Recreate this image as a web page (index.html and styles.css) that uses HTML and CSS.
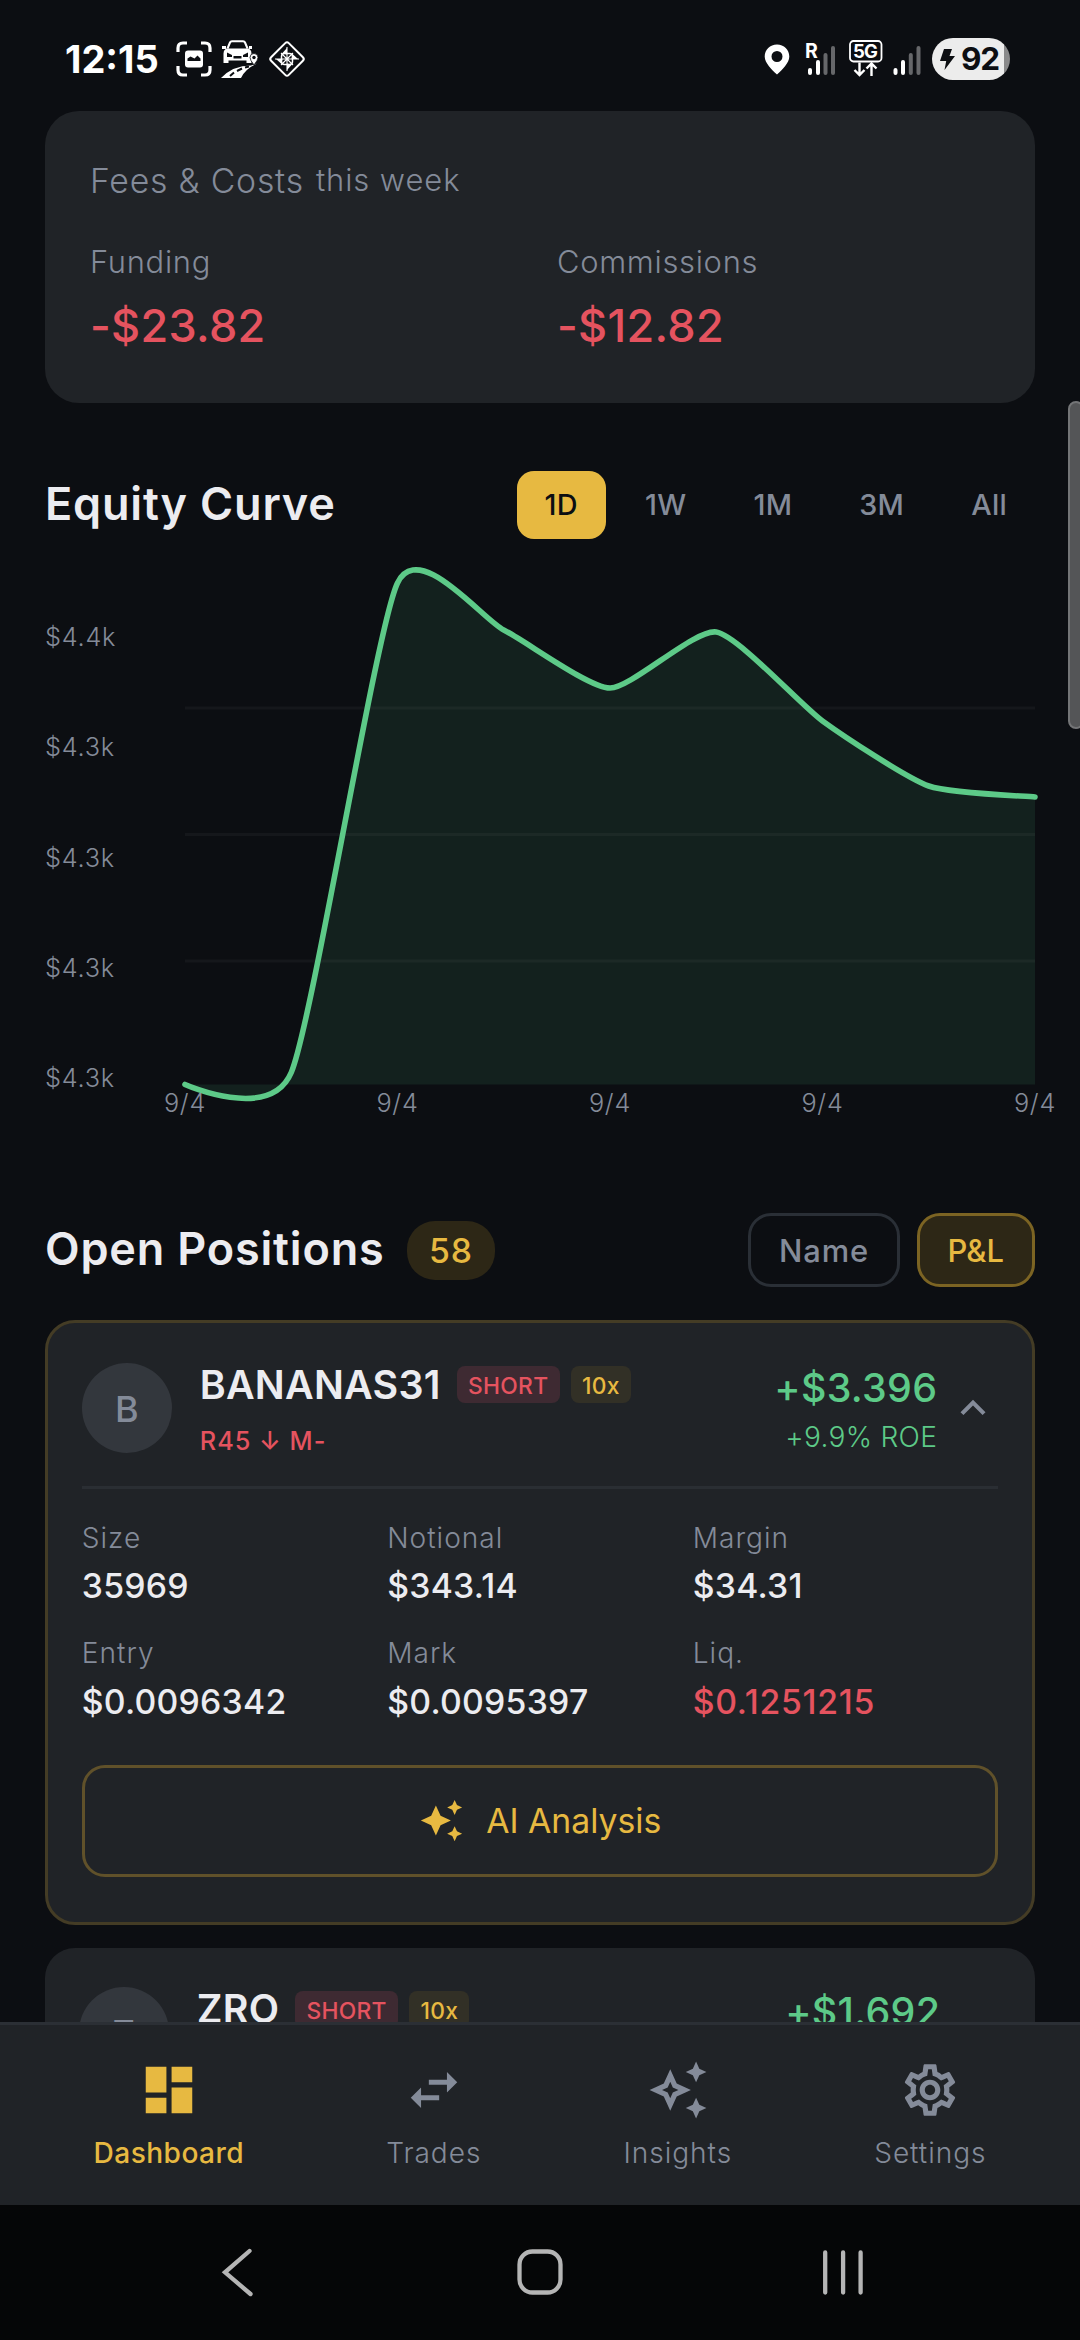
FILE: index.html
```html
<!doctype html>
<html lang="en">
    <head>
        <meta charset="utf-8">
        <title>Dashboard</title>
        <link rel="stylesheet" href="styles.css">
    </head>
    <body>
        <header class="status">
            <span class="clock">12:15</span>
            <svg class="ico-capture" width="36" height="36" viewBox="0 0 36 36">
                <path d="M2 11V7q0-5 5-5h4M25 2h4q5 0 5 5v4M34 25v4q0 5-5 5h-4M11 34H7q-5 0-5-5v-4" fill="none" stroke="#fff" stroke-width="3.2"/>
                <rect x="9" y="9.500" width="18" height="17" rx="3" fill="#fff"/>
                <path d="M11.500 20v-2.500l3-2 4 2 3-3 3 3V20z" fill="#0c0e12"/>
            </svg>
            <svg class="ico-car" width="37" height="38" viewBox="0 0 37 38">
                <path d="M6.500 8.500L9 2.500q.5-1.200 2-1.200h11q1.500 0 2 1.200l2.500 6" fill="none" stroke="#fff" stroke-width="2"/>
                <path d="M1 6h4v3H1zM28 6h3v3h-3zM5 8.500h23q2.500 2 2.500 5V23h-5v-2.500h-18V23h-5v-9.500q0-3 2.500-5z" fill="#fff"/>
                <path d="M6 12.500l5 2.500v2H6zM27 12.500l-5 2.500v2h5zM12.500 16h8v2.500h-8z" fill="#0c0e12"/>
                <path d="M0 38Q12 25.500 30 25.500L36 23.500Q24 29 20 38z" fill="#fff"/>
                <path d="M9 36l4-3.500M16 31l5-2.500M24 27.500l4-1" stroke="#0c0e12" stroke-width="2"/>
                <path d="M33 25q-4-5-4-7.500a4 4 0 0 1 8 0Q37 20 33 25z" fill="#fff" stroke="#0c0e12" stroke-width=".8"/>
                <circle cx="33" cy="17.500" r="1.700" fill="#0c0e12"/>
            </svg>
            <svg class="ico-diamond" width="38" height="38" viewBox="0 0 38 38" fill="none" stroke="#fff">
                <rect x="6.500" y="6.500" width="25" height="25" rx="2.500" transform="rotate(45 19 19)" stroke-width="2"/>
                <path d="M19 7v24M7 19h24M13 13l12 12M25 13L13 25" stroke-width="1.100"/>
                <path d="M19 8v6.500l-5-1zM30 19h-6.500l1-5zM19 30v-6.500l5 1zM8 19h6.500l-1 5z" fill="#fff" stroke="none"/>
                <rect x="13.500" y="13.500" width="11" height="11" rx="3" stroke-width="1.500"/>
            </svg>
            <span class="spacer"></span>
            <svg class="ico-pin" width="26" height="31" viewBox="0 0 26 31">
                <path fill="#fff" fill-rule="evenodd" d="M13 .500C6 .500.700 5.800.700 12.500.700 19 8 26 13 30.500 18 26 25.300 19 25.300 12.500 25.300 5.800 20 .500 13 .500zM13 7a5.500 5.500 0 1 1 0 11 5.500 5.500 0 0 1 0-11z"/>
            </svg>
            <svg class="ico-signal-r" width="31" height="34" viewBox="0 0 31 34">
                <text class="svg-text" x="0" y="16" font-size="19.500">R</text>
                <g stroke="#fff" stroke-width="4" stroke-linecap="round">
                    <path d="M5 28v3M13 20v11"/>
                    <path d="M20.500 13v18M28 6v25" stroke="#66676a"/>
                </g>
            </svg>
            <svg class="ico-5g" width="34" height="38" viewBox="0 0 34 38">
                <rect x="1" y="1" width="31.500" height="20.500" rx="3.500" fill="none" stroke="#fff" stroke-width="1.800"/>
                <text class="svg-text" x="4" y="18" font-size="18.500" textLength="25">5G</text>
                <path d="M10.500 22.500v13M5.500 30l5 5 5-5M22.500 36V23M17.500 28.500l5-5 5 5" fill="none" stroke="#fff" stroke-width="2.400"/>
            </svg>
            <svg class="ico-signal" width="28" height="34" viewBox="0 0 28 34">
                <g stroke="#fff" stroke-width="4" stroke-linecap="round">
                    <path d="M2.500 28v3M10 20v11"/>
                    <path d="M17.800 13v18M25.500 6v25" stroke="#66676a"/>
                </g>
            </svg>
            <span class="battery">
                <svg width="15" height="21" viewBox="0 0 15 21"><path d="M4 0h8l-2.500 7H15L4.500 21l1.700-9H0z" fill="#0c0e12"/></svg>92
            </span>
        </header>

        <main class="content">
            <section class="fees">
                <div class="fees-title">Fees &amp; Costs <small>this week</small></div>
                <div class="fees-row">
                    <div>
                        <div class="fees-label">Funding</div>
                        <div class="fees-value">-$23.82</div>
                    </div>
                    <div>
                        <div class="fees-label">Commissions</div>
                        <div class="fees-value">-$12.82</div>
                    </div>
                </div>
            </section>

            <div class="equity-head">
                <h2>Equity Curve</h2>
                <div class="tabs">
                    <span class="tab active">1D</span>
                    <span class="tab">1W</span>
                    <span class="tab">1M</span>
                    <span class="tab">3M</span>
                    <span class="tab">All</span>
                </div>
            </div>

            <div class="chart">
                <div class="y-axis">
                    <span>$4.4k</span>
                    <span>$4.3k</span>
                    <span>$4.3k</span>
                    <span>$4.3k</span>
                    <span>$4.3k</span>
                </div>
                <div class="plot">
                    <svg width="850" height="526" viewBox="0 0 850 526">
                        <path class="area" d="M0 524.500C0 524.500 85 562.650 106.250 512.500C127.500 462.350 191.250 67.250 212.500 23C233.750 -21.250 297.500 59.500 318.750 70C340 80.500 403.750 127.800 425 128C446.250 128.200 510 68.600 531.250 72C552.500 75.400 616.250 145.600 637.500 161C658.750 176.400 722.500 218.500 743.750 226C765 233.500 839.400 235.900 850 237V524.500z"/>
                        <path class="grid-line" d="M0 148h850M0 274.500h850M0 401h850"/>
                        <path class="curve" d="M0 524.500C0 524.500 85 562.650 106.250 512.500C127.500 462.350 191.250 67.250 212.500 23C233.750 -21.250 297.500 59.500 318.750 70C340 80.500 403.750 127.800 425 128C446.250 128.200 510 68.600 531.250 72C552.500 75.400 616.250 145.600 637.500 161C658.750 176.400 722.500 218.500 743.750 226C765 233.500 839.400 235.900 850 237"/>
                    </svg>
                    <div class="x-axis">
                        <span>9/4</span>
                        <span>9/4</span>
                        <span>9/4</span>
                        <span>9/4</span>
                        <span>9/4</span>
                    </div>
                </div>
            </div>

            <div class="positions-head">
                <h2>Open Positions</h2>
                <span class="count">58</span>
                <span class="spacer"></span>
                <span class="sort">Name</span>
                <span class="sort active">P&amp;L</span>
            </div>

            <section class="position open">
                <div class="position-top">
                    <div class="avatar">B</div>
                    <div class="info">
                        <div class="name">BANANAS31 <span class="chip short">SHORT</span><span class="chip lev">10x</span></div>
                        <div class="signal">R45 ↓ M-</div>
                    </div>
                    <div class="pnl">
                        <div class="pnl-value">+$3.396</div>
                        <div class="pnl-roe">+9.9% ROE</div>
                    </div>
                    <svg class="chevron" viewBox="0 0 24 24"><path d="M12 8l-6 6 1.410 1.410L12 10.830l4.590 4.580L18 14z"/></svg>
                </div>
                <div class="stats">
                    <div><div class="stat-label">Size</div><div class="stat-value">35969</div></div>
                    <div><div class="stat-label">Notional</div><div class="stat-value">$343.14</div></div>
                    <div><div class="stat-label">Margin</div><div class="stat-value">$34.31</div></div>
                    <div><div class="stat-label">Entry</div><div class="stat-value">$0.0096342</div></div>
                    <div><div class="stat-label">Mark</div><div class="stat-value">$0.0095397</div></div>
                    <div><div class="stat-label">Liq.</div><div class="stat-value liq">$0.1251215</div></div>
                </div>
                <div class="ai-button">
                    <svg viewBox="0 0 24 24"><path d="M19 9l1.250-2.750L23 5l-2.750-1.250L19 1l-1.250 2.750L15 5l2.750 1.250L19 9zm-7.500.500L9 4 6.500 9.500 1 12l5.500 2.500L9 20l2.500-5.500L17 12l-5.500-2.500zM19 15l-1.250 2.750L15 19l2.750 1.250L19 23l1.250-2.750L23 19l-2.750-1.250L19 15z"/></svg>
                    AI Analysis
                </div>
            </section>

            <section class="position">
                <div class="position-top">
                    <div class="avatar">Z</div>
                    <div class="info">
                        <div class="name">ZRO <span class="chip short">SHORT</span><span class="chip lev">10x</span></div>
                    </div>
                    <div class="pnl">
                        <div class="pnl-value">+$1.692</div>
                    </div>
                    <svg class="chevron" viewBox="0 0 24 24"><path d="M16.590 8.590L12 13.170 7.410 8.590 6 10l6 6 6-6z"/></svg>
                </div>
            </section>
        </main>

        <nav class="bottom-nav">
            <div class="nav-item active">
                <svg viewBox="0 0 24 24"><path d="M3 13h8V3H3v10zm0 8h8v-6H3v6zm10 0h8V11h-8v10zm0-18v6h8V3h-8z"/></svg>
                Dashboard
            </div>
            <div class="nav-item">
                <svg viewBox="0 0 24 24"><path d="M6.990 11L3 15l3.990 4v-3H14v-2H6.990v-3zM21 9l-3.990-4v3H10v2h7.010v3L21 9z"/></svg>
                Trades
            </div>
            <div class="nav-item">
                <svg viewBox="0 0 24 24"><path d="M19 9l1.250-2.750L23 5l-2.750-1.250L19 1l-1.250 2.750L15 5l2.750 1.250zM19 15l-1.250 2.750L15 19l2.750 1.250L19 23l1.250-2.750L23 19l-2.750-1.250zM11.500 9.500L9 4 6.500 9.500 1 12l5.500 2.500L9 20l2.500-5.500L17 12l-5.500-2.500zm-1.510 3.490L9 15.170l-.99-2.180L5.830 12l2.180-.99L9 8.830l.99 2.180 2.180.99-2.180.99z"/></svg>
                Insights
            </div>
            <div class="nav-item">
                <svg viewBox="0 0 24 24"><path d="M19.430 12.980c.04-.32.07-.64.07-.98s-.03-.66-.07-.98l2.110-1.650c.19-.15.24-.42.12-.64l-2-3.460c-.09-.16-.26-.25-.44-.25-.06 0-.12.010-.17.030l-2.490 1c-.52-.4-1.080-.73-1.690-.98l-.38-2.650C14.460 2.180 14.250 2 14 2h-4c-.25 0-.46.180-.49.420l-.38 2.650c-.61.250-1.170.590-1.690.980l-2.490-1c-.06-.02-.12-.03-.18-.03-.17 0-.34.090-.43.250l-2 3.460c-.13.220-.07.490.12.640l2.110 1.650c-.04.320-.07.650-.07.980s.03.660.07.980l-2.110 1.650c-.19.150-.24.420-.12.640l2 3.460c.09.160.26.250.44.250.06 0 .12-.01.17-.03l2.490-1c.52.400 1.080.730 1.690.980l.38 2.650c.03.240.24.420.49.420h4c.25 0 .46-.18.49-.42l.38-2.650c.61-.25 1.170-.59 1.690-.98l2.490 1c.06.020.12.030.18.030.17 0 .34-.09.43-.25l2-3.460c.12-.22.07-.49-.12-.64l-2.110-1.650zm-1.980-1.710c.04.310.05.520.05.730 0 .21-.02.430-.05.730l-.14 1.130.89.700 1.080.84-.7 1.210-1.270-.51-1.040-.42-.9.680c-.43.320-.84.560-1.250.730l-1.060.430-.16 1.130-.2 1.350h-1.400l-.19-1.350-.16-1.130-1.060-.43c-.43-.18-.83-.41-1.230-.71l-.91-.7-1.060.430-1.270.510-.7-1.210 1.080-.84.890-.7-.14-1.130c-.03-.31-.05-.54-.05-.74s.02-.43.050-.73l.14-1.130-.89-.7-1.080-.84.7-1.210 1.270.510 1.040.420.9-.68c.43-.32.840-.56 1.250-.73l1.060-.43.160-1.130.2-1.350h1.390l.19 1.350.16 1.130 1.060.430c.43.180.83.410 1.230.710l.91.700 1.060-.43 1.270-.51.7 1.210-1.070.85-.89.700.14 1.130zM12 8c-2.210 0-4 1.790-4 4s1.790 4 4 4 4-1.790 4-4-1.790-4-4-4zm0 6c-1.100 0-2-.9-2-2s.9-2 2-2 2 .9 2 2-.9 2-2 2z"/></svg>
                Settings
            </div>
        </nav>

        <footer class="system-nav">
            <svg width="48" height="48" viewBox="0 0 48 48"><path d="M36.500 3L12 24.300 37.500 46"/></svg>
            <svg width="48" height="48" viewBox="0 0 48 48"><rect x="3.500" y="3.500" width="41" height="41" rx="13"/></svg>
            <svg width="48" height="48" viewBox="0 0 48 48"><path d="M6.200 4.500v40M24.100 4.500v40M41.600 4.500v40"/></svg>
        </footer>

        <div class="scrollbar"></div>
    </body>
</html>
```
FILE: styles.css
```css
* {
    box-sizing: border-box;
}
body {
    margin: 0;
    width: 1080px;
    height: 2340px;
    display: flex;
    flex-direction: column;
    position: relative;
    overflow: hidden;
    background: #0c0e12;
    color: #ececf0;
    font-family: Inter, Roboto, sans-serif;
    font-size: 28.1px;
}
svg {
    display: block;
    flex: none;
    overflow: visible;
}
h2 {
    margin: 0;
    font-size: 45px;
    line-height: 54px;
    font-weight: 570;
    letter-spacing: 0.82px;
}
.spacer {
    flex: 1;
}

/* status bar */
.status {
    height: 100px;
    flex: none;
    display: flex;
    align-items: center;
    padding: 18px 70px 0 65px;
}
.clock {
    width: 111px;
    font-size: 38px;
    line-height: 46px;
    font-weight: 700;
    color: #fff;
}
.ico-car {
    margin: 0 10px 0 9px;
}
.ico-pin {
    margin-right: 15px;
}
.ico-signal-r {
    margin-right: 13px;
}
.ico-5g {
    margin-right: 10px;
}
.ico-signal {
    margin-right: 11px;
}
.svg-text {
    fill: #fff;
    font-weight: 700;
}
.battery {
    width: 78px;
    height: 42px;
    display: flex;
    align-items: center;
    gap: 6px;
    padding-left: 8px;
    border-radius: 21px;
    background: linear-gradient(90deg, #ececec 72px, #8a8a8b 72px);
    color: #0c0e12;
    font-size: 31.5px;
    line-height: 42px;
    font-weight: 700;
    letter-spacing: -1.2px;
}

/* everything that scrolls */
.content {
    flex: 1;
    min-height: 0;
    overflow: hidden;
    padding: 11px 45px 0;
}

.fees {
    height: 292px;
    padding: 44.5px 45px 0;
    border-radius: 34px;
    background: #202327;
}
.fees-title {
    display: flex;
    align-items: center;
    gap: 12px;
    font-size: 33.75px;
    line-height: 50px;
    font-weight: 350;
    letter-spacing: 0.8px;
    color: #848b99;
}
.fees-title small {
    font-size: 30.9px;
    line-height: 48px;
    letter-spacing: 0.95px;
    padding-bottom: 2px;
}
.fees-row {
    display: grid;
    grid-template-columns: 1fr 1fr;
    gap: 34px;
    margin-top: 35px;
}
.fees-label {
    font-size: 30.9px;
    line-height: 42px;
    font-weight: 350;
    letter-spacing: 0.7px;
    color: #848b99;
}
.fees-value {
    margin-top: 16px;
    font-size: 45px;
    line-height: 54px;
    font-weight: 550;
    letter-spacing: 0.3px;
    color: #e5535f;
}

.equity-head {
    height: 68px;
    margin-top: 68px;
    display: flex;
    align-items: center;
    justify-content: space-between;
}
.equity-head h2 {
    padding-bottom: 3px;
}
.tabs {
    display: flex;
    gap: 11px;
}
.tab {
    padding: 0 28px;
    border-radius: 17px;
    font-size: 28.8px;
    line-height: 68px;
    font-weight: 500;
    letter-spacing: 0.3px;
    color: #848b99;
}
.tab.active {
    background: #e7b941;
    color: #0c0e12;
}

.chart {
    display: flex;
    margin-top: 21px;
    height: 560px;
    font-size: 25.3px;
    line-height: 34px;
    font-weight: 350;
    letter-spacing: 0.75px;
    color: #848b99;
}
.y-axis {
    width: 140px;
    height: 535px;
    padding-top: 60px;
    display: flex;
    flex-direction: column;
    justify-content: space-between;
}
.x-axis {
    display: grid;
    grid-template-columns: repeat(5, 212.5px);
    margin: 0 -106.25px;
    text-align: center;
    position: relative;
}
.area {
    fill: rgba(93, 202, 136, 0.1);
}
.grid-line {
    fill: none;
    stroke: rgba(255, 255, 255, 0.04);
    stroke-width: 2.8;
}
.curve {
    fill: none;
    stroke: #5dca88;
    stroke-width: 5.6;
    stroke-linecap: round;
}

.positions-head {
    display: flex;
    align-items: center;
    height: 74px;
    margin-top: 93px;
}
.positions-head h2 {
    padding-bottom: 2px;
}
.count {
    height: 59px;
    margin-left: 22px;
    padding: 0 22.5px;
    border-radius: 28px;
    background: #2d2716;
    color: #e7b941;
    font-size: 33.75px;
    line-height: 59px;
    font-weight: 550;
    letter-spacing: 0.8px;
}
.sort {
    height: 74px;
    padding: 0 27.5px;
    border: 3px solid #2a2f36;
    border-radius: 23px;
    color: #848b99;
    font-size: 30.9px;
    line-height: 69px;
    font-weight: 500;
    letter-spacing: 0.9px;
}
.sort.active {
    margin-left: 17px;
    padding: 0 28px;
    border-color: #7c6423;
    background: #2d2716;
    color: #e7b941;
    font-weight: 550;
    letter-spacing: 0;
}

.position {
    margin-top: 22.5px;
    padding: 39.5px 33.75px 0;
    border-radius: 30px;
    background: #202327;
}
.position.open {
    height: 605px;
    margin-top: 33px;
    border: 3px solid #443c25;
}
.position-top {
    display: flex;
    height: 90px;
}
.avatar {
    width: 90px;
    height: 90px;
    margin-right: 28px;
    border-radius: 50%;
    background: #33373d;
    color: #848b99;
    font-size: 36px;
    line-height: 92px;
    font-weight: 500;
    text-align: center;
}
.info {
    flex: 1;
}
.name {
    display: flex;
    align-items: center;
    margin-top: -2px;
    font-size: 39.4px;
    line-height: 48px;
    font-weight: 600;
    letter-spacing: 0.25px;
}
.chip {
    height: 37px;
    padding: 0 11.3px;
    border-radius: 8px;
    font-size: 22.8px;
    line-height: 39px;
    font-weight: 500;
    letter-spacing: 0.3px;
}
.short {
    margin-left: 16px;
    background: #3e2a32;
    color: #e5535f;
}
.lev {
    margin-left: 11px;
    background: #323026;
    color: #e7b941;
    font-weight: 550;
}
.signal {
    margin-top: 15px;
    font-size: 25.3px;
    line-height: 34px;
    font-weight: 550;
    letter-spacing: 1px;
    color: #e5535f;
}
.pnl {
    text-align: right;
    color: #5dca88;
}
.pnl-value {
    font-size: 39.4px;
    line-height: 51px;
    font-weight: 550;
    letter-spacing: 0.3px;
}
.pnl-roe {
    margin-top: 5px;
    font-size: 28.1px;
    line-height: 36px;
    font-weight: 350;
    letter-spacing: 0.3px;
}
.chevron {
    width: 50px;
    height: 50px;
    margin: 20px 0 0 11px;
    fill: #848b99;
}

.stats {
    display: grid;
    grid-template-columns: repeat(3, 1fr);
    row-gap: 27px;
    margin-top: 33px;
    padding-top: 31px;
    border-top: 3px solid #2a2e33;
}
.stat-label {
    font-size: 28.1px;
    line-height: 36px;
    font-weight: 350;
    letter-spacing: 1px;
    color: #848b99;
}
.stat-value {
    margin-top: 8.5px;
    font-size: 33.75px;
    line-height: 44px;
    font-weight: 550;
    letter-spacing: 0.25px;
}
.liq {
    letter-spacing: 0.7px;
    color: #e5535f;
}

.ai-button {
    display: flex;
    align-items: center;
    justify-content: center;
    gap: 22.5px;
    height: 112px;
    margin-top: 41px;
    border: 3px solid #60512a;
    border-radius: 23px;
    color: #e7b941;
    font-size: 33.75px;
}
.ai-button svg {
    width: 45px;
    height: 45px;
    fill: #e7b941;
}

/* tab bar */
.bottom-nav {
    flex: none;
    height: 183px;
    display: flex;
    justify-content: space-around;
    padding: 34px 22.5px 0;
    border-top: 3px solid #2b2f35;
    background: #202327;
}
.nav-item {
    display: flex;
    flex-direction: column;
    align-items: center;
    gap: 14px;
    color: #848b99;
    font-size: 28.1px;
    line-height: 36px;
    font-weight: 350;
    letter-spacing: 0.95px;
}
.nav-item svg {
    width: 62px;
    height: 62px;
    fill: #848b99;
}
.nav-item.active {
    color: #e7b941;
    font-weight: 550;
    letter-spacing: 0.45px;
}
.nav-item.active svg {
    fill: #e7b941;
}

.system-nav {
    flex: none;
    height: 135px;
    display: flex;
    align-items: center;
    justify-content: space-between;
    padding: 0 213px 2px;
    background: #050607;
}
.system-nav svg {
    fill: none;
    stroke: #b5b5b5;
    stroke-width: 4.3;
    stroke-linecap: round;
}

.scrollbar {
    position: absolute;
    top: 401px;
    right: -4px;
    width: 16px;
    height: 328px;
    border: 2px solid #747577;
    border-radius: 12px;
    background: #545557;
}
```
